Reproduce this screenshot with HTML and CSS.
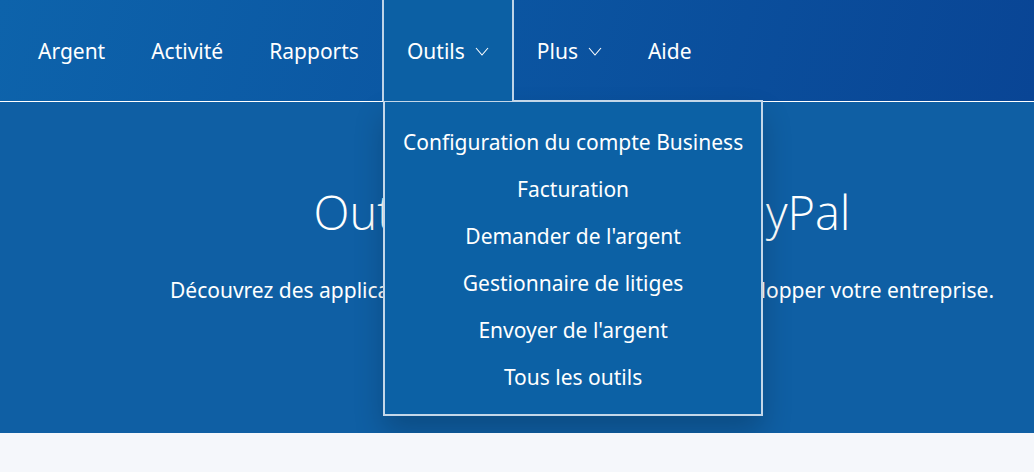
FILE: index.html
```html
<!DOCTYPE html>
<html lang="fr">
<head>
<meta charset="utf-8">
<title>Outils</title>
<meta name="viewport" content="width=device-width, initial-scale=1">
<link rel="stylesheet" href="styles.css">
</head>
<body>
<header class="header">
  <nav class="nav" aria-label="Navigation principale">
    <a class="nav-link" href="#argent">Argent</a>
    <a class="nav-link" href="#activite">Activité</a>
    <a class="nav-link" href="#rapports">Rapports</a>
    <div class="nav-group">
      <button class="nav-link nav-link-open" type="button" aria-expanded="true" aria-controls="menu-outils">Outils
        <svg class="chevron" viewBox="0 0 14 8" aria-hidden="true"><path d="M1 1l6 7 6-7"/></svg>
      </button>
      <ul class="menu" id="menu-outils">
        <li><a class="menu-link" href="#configuration">Configuration du compte Business</a></li>
        <li><a class="menu-link" href="#facturation">Facturation</a></li>
        <li><a class="menu-link" href="#demander">Demander de l'argent</a></li>
        <li><a class="menu-link" href="#litiges">Gestionnaire de litiges</a></li>
        <li><a class="menu-link" href="#envoyer">Envoyer de l'argent</a></li>
        <li><a class="menu-link" href="#tous">Tous les outils</a></li>
      </ul>
    </div>
    <button class="nav-link" type="button" aria-expanded="false">Plus
      <svg class="chevron" viewBox="0 0 14 8" aria-hidden="true"><path d="M1 1l6 7 6-7"/></svg>
    </button>
    <a class="nav-link" href="#aide">Aide</a>
  </nav>
</header>
<main class="hero">
  <h1 class="hero-title">Outils Business de PayPal</h1>
  <p class="hero-text">Découvrez des applications et des fonctionnalités pour développer votre entreprise.</p>
</main>
</body>
</html>
```
FILE: styles.css
```css
* {
  box-sizing: border-box;
}

body {
  margin: 0;
  background: #f5f7fb;
  color: #fff;
  font-family: "Noto Sans", "Open Sans", sans-serif;
  font-size: 21px;
  line-height: 24px;
}

.header {
  border-bottom: 1px solid #fff;
  background: linear-gradient(105deg, #0d63ab, #0b56a2 45%, #094595);
}

.nav {
  display: flex;
  padding-left: 15px;
}

.nav-group {
  position: relative;
  display: flex;
}

.nav-link {
  display: flex;
  align-items: center;
  gap: 10px;
  height: 101px;
  padding: 0 23px;
  border: 0 solid #bfd4e8;
  background: transparent;
  color: inherit;
  font: inherit;
  text-decoration: none;
  white-space: nowrap;
}

.nav-link-open {
  position: relative;
  z-index: 2;
  border-width: 0 2px;
  background: #0c60a4;
}

.chevron {
  width: 14px;
  height: 8px;
  overflow: visible;
  fill: none;
  stroke: currentColor;
  stroke-width: 1.1;
}

.menu {
  position: absolute;
  z-index: 1;
  top: 100px;
  left: 1px;
  margin: 0;
  padding: 17px 18px 13px;
  border: 2px solid #c4d7e9;
  background: #0c61a5;
  box-shadow: 0 16px 28px rgba(0, 0, 0, 0.2);
  list-style: none;
  text-align: center;
  white-space: nowrap;
}

.menu-link {
  display: block;
  color: inherit;
  line-height: 47px;
  text-decoration: none;
}

.hero {
  padding: 78px 0 129px 130px;
  background: #0f5fa4;
  text-align: center;
}

.hero-title {
  margin: 0 0 33px;
  font-family: "Open Sans", "Noto Sans", sans-serif;
  font-size: 47px;
  font-weight: 300;
  line-height: 64px;
}

.hero-text {
  margin: 0;
  line-height: 27px;
}
```
